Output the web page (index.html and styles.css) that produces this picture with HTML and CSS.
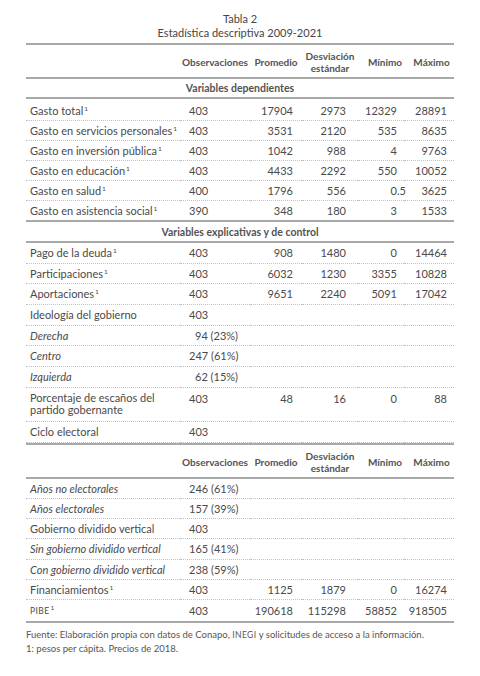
FILE: index.html
```html
<!DOCTYPE html>
<html lang="es">
<head>
<meta charset="utf-8">
<link rel="stylesheet" href="styles.css">
</head>
<body>
<div class="page">
  <div class="title">
    <div>Tabla 2</div>
    <div>Estadística descriptiva 2009-2021</div>
  </div>
  <table class="stats">
    <colgroup>
      <col class="c-label"><col class="c-obs"><col class="c-prom"><col class="c-desv"><col class="c-min"><col class="c-max">
    </colgroup>
    <thead>
      <tr class="head top">
        <th></th><th class="obs">Observaciones</th><th>Promedio</th><th class="desv">Desviación<br>estándar</th><th class="hmin">Mínimo</th><th class="hmax">Máximo</th>
      </tr>
    </thead>
    <tbody class="s1">
      <tr class="section"><td colspan="6">Variables dependientes</td></tr>
      <tr class="first"><td>Gasto total<sup>1</sup></td><td class="o">403</td><td>17904</td><td>2973</td><td>12329</td><td>28891</td></tr>
      <tr><td>Gasto en servicios personales<sup>1</sup></td><td class="o">403</td><td>3531</td><td>2120</td><td>535</td><td>8635</td></tr>
      <tr><td>Gasto en inversión pública<sup>1</sup></td><td class="o">403</td><td>1042</td><td>988</td><td>4</td><td>9763</td></tr>
      <tr><td>Gasto en educación<sup>1</sup></td><td class="o">403</td><td>4433</td><td>2292</td><td>550</td><td>10052</td></tr>
      <tr><td>Gasto en salud<sup>1</sup></td><td class="o">400</td><td>1796</td><td>556</td><td><span class="dec">0<span class="frac">.5</span></span></td><td>3625</td></tr>
      <tr class="last"><td>Gasto en asistencia social<sup>1</sup></td><td class="o">390</td><td>348</td><td>180</td><td>3</td><td>1533</td></tr>
    </tbody>
    <tbody class="s2">
      <tr class="section ruled"><td colspan="6">Variables explicativas y de control</td></tr>
      <tr><td>Pago de la deuda<sup>1</sup></td><td class="o">403</td><td>908</td><td>1480</td><td>0</td><td>14464</td></tr>
      <tr><td>Participaciones<sup>1</sup></td><td class="o">403</td><td>6032</td><td>1230</td><td>3355</td><td>10828</td></tr>
      <tr><td>Aportaciones<sup>1</sup></td><td class="o">403</td><td>9651</td><td>2240</td><td>5091</td><td>17042</td></tr>
      <tr><td>Ideología del gobierno</td><td class="o">403</td><td></td><td></td><td></td><td></td></tr>
      <tr><td class="it">Derecha</td><td class="o"><span class="pad">94 (23%)</span></td><td></td><td></td><td></td><td></td></tr>
      <tr><td class="it">Centro</td><td class="o">247 (61%)</td><td></td><td></td><td></td><td></td></tr>
      <tr><td class="it">Izquierda</td><td class="o"><span class="pad">62 (15%)</span></td><td></td><td></td><td></td><td></td></tr>
      <tr class="tall"><td>Porcentaje de escaños del<br>partido gobernante</td><td class="o">403</td><td>48</td><td>16</td><td>0</td><td>88</td></tr>
      <tr class="end"><td>Ciclo electoral</td><td class="o">403</td><td></td><td></td><td></td><td></td></tr>
    </tbody>
    <tbody class="s3">
      <tr class="head mid">
        <th></th><th class="obs">Observaciones</th><th>Promedio</th><th class="desv">Desviación<br>estándar</th><th class="hmin">Mínimo</th><th class="hmax">Máximo</th>
      </tr>
      <tr><td class="it">Años no electorales</td><td class="o">246 (61%)</td><td></td><td></td><td></td><td></td></tr>
      <tr><td class="it">Años electorales</td><td class="o">157 (39%)</td><td></td><td></td><td></td><td></td></tr>
      <tr><td>Gobierno dividido vertical</td><td class="o">403</td><td></td><td></td><td></td><td></td></tr>
      <tr><td class="it">Sin gobierno dividido vertical</td><td class="o">165 (41%)</td><td></td><td></td><td></td><td></td></tr>
      <tr><td class="it">Con gobierno dividido vertical</td><td class="o">238 (59%)</td><td></td><td></td><td></td><td></td></tr>
      <tr><td>Financiamientos<sup>1</sup></td><td class="o">403</td><td>1125</td><td>1879</td><td>0</td><td>16274</td></tr>
      <tr class="final"><td><span class="sc">PIBE</span><sup>1</sup></td><td class="o">403</td><td>190618</td><td>115298</td><td>58852</td><td>918505</td></tr>
    </tbody>
  </table>
  <div class="note">
    <div>Fuente: Elaboración propia con datos de Conapo, <span class="sc">INEGI</span> y solicitudes de acceso a la información.</div>
    <div>1: pesos per cápita. Precios de 2018.</div>
  </div>
</div>
</body>
</html>
```
FILE: styles.css
```css
html, body {
  margin: 0;
  padding: 0;
  background: #ffffff;
}
body {
  font-family: "Lato", "Open Sans", sans-serif;
  color: #4a4a4a;
}
.page {
  width: 428px;
  padding: 12px 26px 0 26px;
}
.title {
  text-align: center;
  font-size: 11px;
  line-height: 14px;
  color: #454545;
  margin-bottom: 3px;
}
.stats {
  width: 428px;
  border-collapse: separate;
  border-spacing: 0;
  font-size: 11px;
  table-layout: fixed;
}
.c-label { width: 154px; }
.c-obs { width: 70px; }
.c-prom { width: 52px; }
.c-desv { width: 56px; }
.c-min { width: 46px; }
.c-max { width: 50px; }
.stats td {
  padding-top: 3px;
  padding-bottom: 2px;
  padding-left: 0;
  padding-right: 0;
  line-height: 14px;
  height: 14px;
  border-bottom: 1px dotted #c2c2c2;
  text-align: right;
  white-space: nowrap;
}
.stats td:nth-child(1) {
  text-align: left;
  padding-left: 4px;
}
.stats td:nth-child(3) { padding-right: 9px; }
.stats td:nth-child(4) { padding-right: 12px; }
.stats td:nth-child(5) { padding-right: 7px; }
.stats td:nth-child(6) { padding-right: 7px; }
.stats td.o {
  text-align: left;
  padding-left: 9px;
}
.pad { padding-left: 6px; }
.it { font-style: italic; }
sup {
  font-size: 6.5px;
  line-height: 0;
  vertical-align: 4px;
  margin-left: 1px;
}
.sc {
  font-size: 8.5px;
  letter-spacing: 0.4px;
}
.dec { position: relative; }
.frac {
  position: absolute;
  left: 100%;
  top: 0;
}
.head th {
  font-size: 10px;
  font-weight: 700;
  line-height: 12px;
  color: #535353;
  padding: 5px 0 3px 0;
  text-align: center;
  border-bottom: 2px solid #a9a9a9;
  white-space: nowrap;
}
.head th.hmin { padding-left: 8px; }
.head th.hmax { padding-left: 5px; }
.head.top th { border-top: 2px solid #a9a9a9; }
.head.mid th { border-top: 2px solid #a9a9a9; }
.stats tr.section td {
  text-align: center;
  font-weight: 700;
  font-size: 10.5px;
  color: #535353;
  padding: 2px 0 2px 0;
  border-bottom: 2px solid #a9a9a9;
}
.stats tr.section.ruled td {
  border-top: 2px solid #a9a9a9;
  padding: 3px 0 2px 0;
}
.stats tr.first td { padding-top: 5px; }
.stats tr.last td { border-bottom: none; }
.stats .s2 td { padding-top: 3px; padding-bottom: 2.7px; }
.stats .s2 tr.tall td {
  vertical-align: top;
  line-height: 12px;
  height: 24px;
  padding-top: 4px;
  padding-bottom: 4px;
}
.stats .s2 tr.tall td.o,
.stats .s2 tr.tall td:nth-child(n+3) { padding-top: 5px; }
.stats .s3 td { padding-top: 3px; padding-bottom: 2.33px; }
.stats tr.final td { border-bottom: 2px solid #a9a9a9; }
.note {
  font-size: 9.5px;
  line-height: 14px;
  color: #555;
  margin-top: 5px;
  white-space: nowrap;
}
```
